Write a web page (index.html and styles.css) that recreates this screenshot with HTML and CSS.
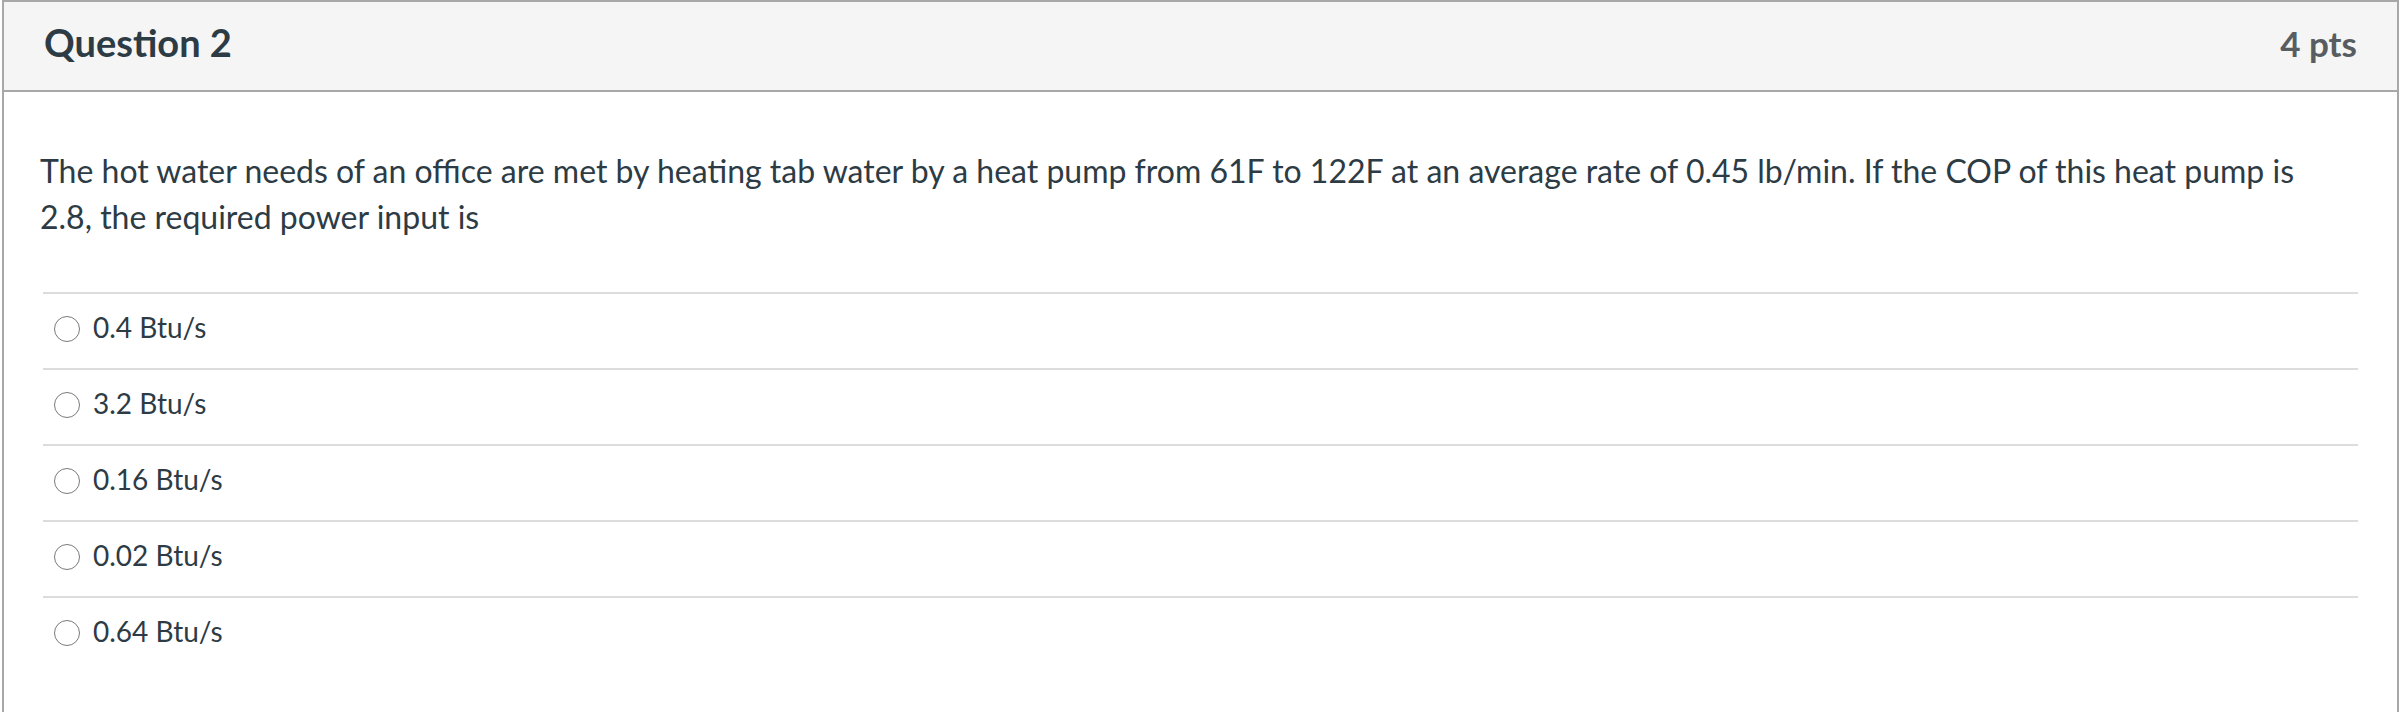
FILE: index.html
```html
<!DOCTYPE html>
<html lang="en">
<head>
<meta charset="utf-8">
<title>Question 2</title>
<link rel="stylesheet" href="styles.css">
</head>
<body>
<div class="question">
  <div class="header">
    <span class="name">Question 2</span>
    <span class="points">4 pts</span>
  </div>
  <div class="content">
    <div class="question-text">The hot water needs of an office are met by heating tab water by a heat pump from 61F to 122F at an average rate of 0.45 lb/min. If the COP of this heat pump is 2.8, the required power input is</div>
    <div class="answers">
      <label class="answer"><span class="radio"></span><span class="answer-text">0.4 Btu/s</span></label>
      <label class="answer"><span class="radio"></span><span class="answer-text">3.2 Btu/s</span></label>
      <label class="answer"><span class="radio"></span><span class="answer-text">0.16 Btu/s</span></label>
      <label class="answer"><span class="radio"></span><span class="answer-text">0.02 Btu/s</span></label>
      <label class="answer"><span class="radio"></span><span class="answer-text">0.64 Btu/s</span></label>
    </div>
  </div>
</div>
</body>
</html>
```
FILE: styles.css
```css
html, body {
  margin: 0;
  padding: 0;
  background: #ffffff;
}
body {
  font-family: "Lato", "Liberation Sans", sans-serif;
  color: #2d3b45;
  overflow: hidden;
}
.question {
  box-sizing: border-box;
  width: 2397px;
  margin-left: 2px;
  border: 2px solid #a8a8a8;
  border-bottom: none;
  min-height: 712px;
}
.header {
  box-sizing: border-box;
  height: 90px;
  background: #f5f5f5;
  border-bottom: 2px solid #a8a8a8;
  display: flex;
  justify-content: space-between;
  align-items: baseline;
  padding: 18px 40px 0 40px;
}
.name {
  font-size: 38px;
  font-weight: 700;
  line-height: 1.2;
  color: #2d3b45;
}
.points {
  font-size: 35px;
  font-weight: 700;
  line-height: 1.2;
  color: #585d61;
}
.content {
  padding: 56px 39px 0 36px;
}
.question-text {
  font-size: 32px;
  line-height: 46px;
  padding-right: 40px;
}
.answers {
  margin-top: 52px;
  margin-left: 3px;
}
.answer {
  display: flex;
  align-items: center;
  height: 74px;
  border-top: 2px solid #dcdcdc;
}
.radio {
  box-sizing: border-box;
  width: 26px;
  height: 26px;
  border: 1.5px solid #7a7a7a;
  border-radius: 50%;
  margin-left: 11px;
  margin-right: 13px;
  margin-bottom: 4px;
  background: #ffffff;
  flex: none;
}
.answer-text {
  font-size: 28px;
  line-height: 40px;
  margin-bottom: 8px;
}
```
